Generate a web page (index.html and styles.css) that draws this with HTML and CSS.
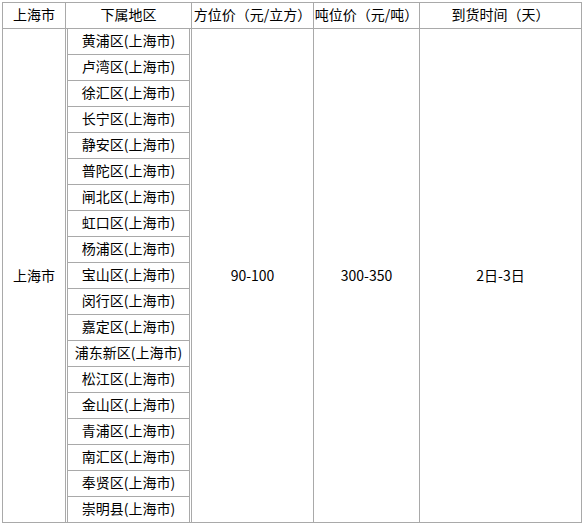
FILE: index.html
```html
<!DOCTYPE html>
<html lang="zh-CN">
<head>
<meta charset="utf-8">
<title>上海市 运价表</title>
<link rel="stylesheet" href="styles.css">
</head>
<body>
<table class="freight">
  <colgroup>
    <col class="c-city">
    <col class="c-district">
    <col class="c-vol">
    <col class="c-ton">
    <col class="c-time">
  </colgroup>
  <thead>
    <tr>
      <th>上海市</th>
      <th>下属地区</th>
      <th>方位价（元/立方）</th>
      <th>吨位价（元/吨）</th>
      <th>到货时间（天）</th>
    </tr>
  </thead>
  <tbody>
    <tr>
      <td class="cell">上海市</td>
      <td class="districts">
        <div class="district">黄浦区(上海市)</div>
        <div class="district">卢湾区(上海市)</div>
        <div class="district">徐汇区(上海市)</div>
        <div class="district">长宁区(上海市)</div>
        <div class="district">静安区(上海市)</div>
        <div class="district">普陀区(上海市)</div>
        <div class="district">闸北区(上海市)</div>
        <div class="district">虹口区(上海市)</div>
        <div class="district">杨浦区(上海市)</div>
        <div class="district">宝山区(上海市)</div>
        <div class="district">闵行区(上海市)</div>
        <div class="district">嘉定区(上海市)</div>
        <div class="district">浦东新区(上海市)</div>
        <div class="district">松江区(上海市)</div>
        <div class="district">金山区(上海市)</div>
        <div class="district">青浦区(上海市)</div>
        <div class="district">南汇区(上海市)</div>
        <div class="district">奉贤区(上海市)</div>
        <div class="district">崇明县(上海市)</div>
      </td>
      <td class="cell">90-100</td>
      <td class="cell">300-350</td>
      <td class="cell">2日-3日</td>
    </tr>
  </tbody>
</table>
</body>
</html>
```
FILE: styles.css
```css
html, body {
  margin: 0;
  padding: 0;
  background: #ffffff;
}

body {
  padding: 2px 0 0 2px;
  font-family: "Noto Sans CJK SC", "Noto Sans", sans-serif;
  font-size: 14px;
  color: #000000;
}

.freight {
  table-layout: fixed;
  border-collapse: separate;
  border-spacing: 0;
  border-top: 1px solid #a9a9a9;
  border-left: 1px solid #a9a9a9;
  width: 580px;
}

.c-city { width: 63px; }
.c-district { width: 126px; }
.c-vol { width: 122px; }
.c-ton { width: 106px; }
.c-time { width: 162px; }

.freight th,
.freight td {
  box-sizing: border-box;
  border-right: 1px solid #a9a9a9;
  border-bottom: 1px solid #a9a9a9;
  padding: 0;
  text-align: center;
  vertical-align: middle;
  font-weight: normal;
  white-space: nowrap;
}

.freight th {
  height: 26px;
  line-height: 23px;
  padding-bottom: 2px;
}

.freight td.cell {
  padding-bottom: 2px;
}

.freight td.districts {
  padding: 0 1px;
  vertical-align: top;
}

.district {
  height: 26px;
  box-sizing: border-box;
  line-height: 23px;
  padding-bottom: 2px;
  border-left: 1px solid #a9a9a9;
  border-right: 1px solid #a9a9a9;
  border-bottom: 1px solid #a9a9a9;
  text-align: center;
}

.district:last-child {
  border-bottom: none;
  height: 25px;
}
```
